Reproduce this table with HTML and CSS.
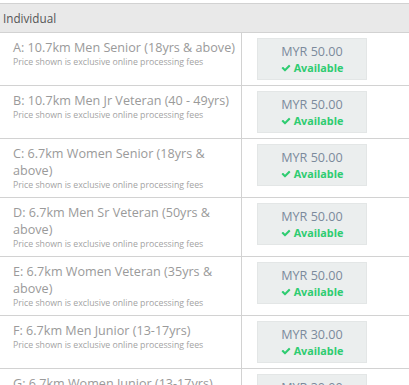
FILE: index.html
```html
<!DOCTYPE html>
<html lang="en">
<head>
  <meta charset="UTF-8">
  <meta name="viewport" content="width=device-width, initial-scale=1.0">
  <title>Race Categories</title>
  <link rel="stylesheet" href="styles.css">
</head>
<body>
  <div class="category-list">
    <div class="category-header">Individual</div>

    <div class="category-row">
      <div class="category-info">
        <div class="category-name">A: 10.7km Men Senior (18yrs &amp; above)</div>
        <div class="category-note">Price shown is exclusive online processing fees</div>
      </div>
      <div class="category-price">
        <div class="price-box">
          <div class="price">MYR 50.00</div>
          <div class="status"><svg class="check" viewBox="0 0 1792 1792"><path d="M1671 566q0 40-28 68l-724 724-136 136q-28 28-68 28t-68-28l-136-136-362-362q-28-28-28-68t28-68l136-136q28-28 68-28t68 28l294 295 656-657q28-28 68-28t68 28l136 136q28 28 28 68z"/></svg>Available</div>
        </div>
      </div>
    </div>

    <div class="category-row">
      <div class="category-info">
        <div class="category-name">B: 10.7km Men Jr Veteran (40 - 49yrs)</div>
        <div class="category-note">Price shown is exclusive online processing fees</div>
      </div>
      <div class="category-price">
        <div class="price-box">
          <div class="price">MYR 50.00</div>
          <div class="status"><svg class="check" viewBox="0 0 1792 1792"><path d="M1671 566q0 40-28 68l-724 724-136 136q-28 28-68 28t-68-28l-136-136-362-362q-28-28-28-68t28-68l136-136q28-28 68-28t68 28l294 295 656-657q28-28 68-28t68 28l136 136q28 28 28 68z"/></svg>Available</div>
        </div>
      </div>
    </div>

    <div class="category-row">
      <div class="category-info">
        <div class="category-name">C: 6.7km Women Senior (18yrs &amp; above)</div>
        <div class="category-note">Price shown is exclusive online processing fees</div>
      </div>
      <div class="category-price">
        <div class="price-box">
          <div class="price">MYR 50.00</div>
          <div class="status"><svg class="check" viewBox="0 0 1792 1792"><path d="M1671 566q0 40-28 68l-724 724-136 136q-28 28-68 28t-68-28l-136-136-362-362q-28-28-28-68t28-68l136-136q28-28 68-28t68 28l294 295 656-657q28-28 68-28t68 28l136 136q28 28 28 68z"/></svg>Available</div>
        </div>
      </div>
    </div>

    <div class="category-row">
      <div class="category-info">
        <div class="category-name">D: 6.7km Men Sr Veteran (50yrs &amp; above)</div>
        <div class="category-note">Price shown is exclusive online processing fees</div>
      </div>
      <div class="category-price">
        <div class="price-box">
          <div class="price">MYR 50.00</div>
          <div class="status"><svg class="check" viewBox="0 0 1792 1792"><path d="M1671 566q0 40-28 68l-724 724-136 136q-28 28-68 28t-68-28l-136-136-362-362q-28-28-28-68t28-68l136-136q28-28 68-28t68 28l294 295 656-657q28-28 68-28t68 28l136 136q28 28 28 68z"/></svg>Available</div>
        </div>
      </div>
    </div>

    <div class="category-row">
      <div class="category-info">
        <div class="category-name">E: 6.7km Women Veteran (35yrs &amp; above)</div>
        <div class="category-note">Price shown is exclusive online processing fees</div>
      </div>
      <div class="category-price">
        <div class="price-box">
          <div class="price">MYR 50.00</div>
          <div class="status"><svg class="check" viewBox="0 0 1792 1792"><path d="M1671 566q0 40-28 68l-724 724-136 136q-28 28-68 28t-68-28l-136-136-362-362q-28-28-28-68t28-68l136-136q28-28 68-28t68 28l294 295 656-657q28-28 68-28t68 28l136 136q28 28 28 68z"/></svg>Available</div>
        </div>
      </div>
    </div>

    <div class="category-row">
      <div class="category-info">
        <div class="category-name">F: 6.7km Men Junior (13-17yrs)</div>
        <div class="category-note">Price shown is exclusive online processing fees</div>
      </div>
      <div class="category-price">
        <div class="price-box">
          <div class="price">MYR 30.00</div>
          <div class="status"><svg class="check" viewBox="0 0 1792 1792"><path d="M1671 566q0 40-28 68l-724 724-136 136q-28 28-68 28t-68-28l-136-136-362-362q-28-28-28-68t28-68l136-136q28-28 68-28t68 28l294 295 656-657q28-28 68-28t68 28l136 136q28 28 28 68z"/></svg>Available</div>
        </div>
      </div>
    </div>

    <div class="category-row">
      <div class="category-info">
        <div class="category-name">G: 6.7km Women Junior (13-17yrs)</div>
        <div class="category-note">Price shown is exclusive online processing fees</div>
      </div>
      <div class="category-price">
        <div class="price-box">
          <div class="price">MYR 30.00</div>
          <div class="status"><svg class="check" viewBox="0 0 1792 1792"><path d="M1671 566q0 40-28 68l-724 724-136 136q-28 28-68 28t-68-28l-136-136-362-362q-28-28-28-68t28-68l136-136q28-28 68-28t68 28l294 295 656-657q28-28 68-28t68 28l136 136q28 28 28 68z"/></svg>Available</div>
        </div>
      </div>
    </div>
  </div>
</body>
</html>
```

FILE: styles.css
```css
body {
  font-family: "Open Sans", Arial, sans-serif;
  margin: 0;
  padding: 0;
  background-color: #ffffff;
}
.category-list {
  margin-top: 3px;
}
.category-header {
  border-top: 1px solid #d2d2d2;
  background-color: #e9e9e9;
  color: #555555;
  font-size: 11.7px;
  line-height: 28px;
  height: 28px;
  padding-left: 3px;
}
.category-row {
  display: flex;
  border-top: 1px solid #d2d2d2;
}
.category-info {
  width: 226px;
  padding: 6px 2px 6px 13px;
  border-right: 1px solid #d2d2d2;
}
.category-name {
  font-size: 12.6px;
  line-height: 17px;
  color: #9a9a9a;
}
.category-note {
  font-size: 8.75px;
  line-height: 12px;
  color: #a3a3a3;
}
.category-price {
  padding: 5px 15px;
}
.price-box {
  width: 108px;
  height: 40px;
  background-color: #ebeeee;
  border: 1px solid #e3e6e6;
  text-align: center;
}
.price {
  font-size: 12.6px;
  line-height: 16px;
  padding-top: 5px;
  color: #7b8a9c;
}
.status {
  font-size: 10.8px;
  line-height: 15px;
  font-weight: 700;
  color: #2ecc71;
}
.check {
  width: 10px;
  height: 10px;
  fill: #2ecc71;
  margin-right: 3px;
  vertical-align: -1px;
}
```
